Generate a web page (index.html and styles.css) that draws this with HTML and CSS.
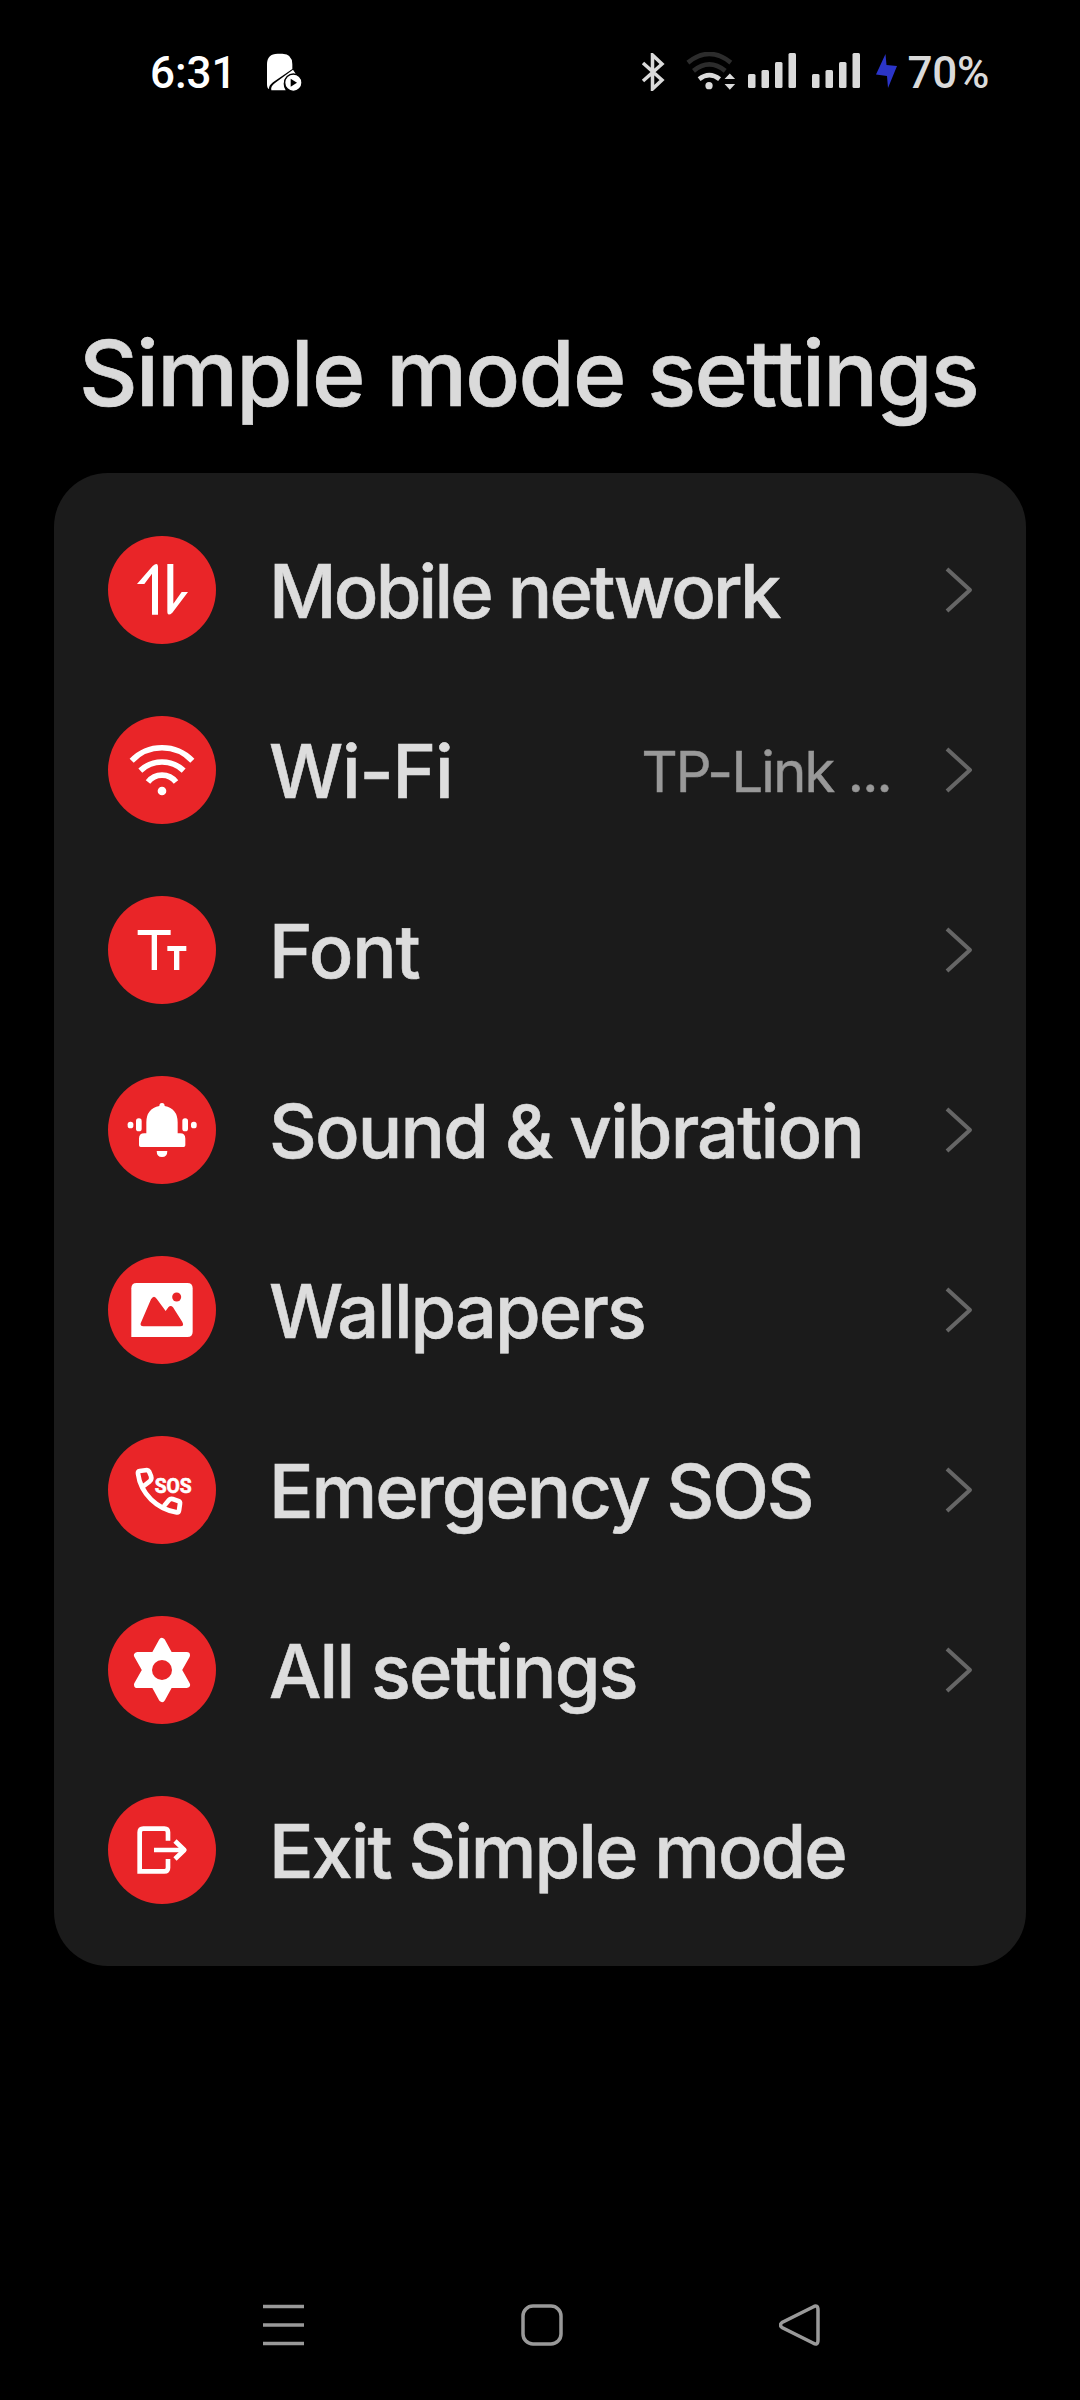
FILE: index.html
```html
<!DOCTYPE html>
<html lang="en">

<head>
    <meta charset="UTF-8">
    <meta name="viewport" content="width=device-width, initial-scale=1.0">
    <title>Simple mode settings</title>
    <link rel="stylesheet" href="styles.css">
</head>

<body>
    <div class="status-bar">
        <span class="time">6:31</span>
        <svg class="notification" viewBox="0 0 105 117">
            <path d="M0 34Q0 2 32 2H46Q76 2 76 34V48L18 88Q5 98 6 108Q0 106 0 94Z" />
            <path d="M13 112Q10 100 24 90L78 50L86 62Q50 66 50 92Q50 104 56 112Z" />
            <circle cx="79" cy="89" r="26" />
            <path class="cutout" d="M71 77V101L90 89Z" />
        </svg>
        <div class="status-icons">
            <svg class="bluetooth" viewBox="0 0 24 38">
                <path d="M2 10L21 27L11.500 36V2L21 11L2 28" />
            </svg>
            <svg class="wifi-status" viewBox="0 0 150 115">
                <path class="dim" d="M5 32Q70 -20 135 32" />
                <path class="dim" d="M22 57Q70 18 118 57" />
                <path class="lit" d="M39 82Q70 58 101 82" />
                <circle cx="69" cy="102" r="11" />
                <path d="M132 65L148 82H116ZM116 97H148L132 114Z" />
            </svg>
            <svg class="signal" viewBox="0 0 48 35">
                <rect x="0" y="21" width="7.500" height="14" rx="1.500" />
                <rect x="13.500" y="17" width="7.500" height="18" rx="1.500" />
                <rect x="27" y="9" width="7.500" height="26" rx="1.500" />
                <rect x="40.500" y="0" width="7.500" height="35" rx="1.500" />
            </svg>
            <svg class="signal" viewBox="0 0 48 35">
                <rect x="0" y="21" width="7.500" height="14" rx="1.500" />
                <rect x="13.500" y="17" width="7.500" height="18" rx="1.500" />
                <rect x="27" y="9" width="7.500" height="26" rx="1.500" />
                <rect x="40.500" y="0" width="7.500" height="35" rx="1.500" />
            </svg>
            <svg class="bolt" viewBox="0 0 21 34">
                <path d="M9.500 0L0 20.500L11 22L12 34L21 12L10.500 11Z" />
            </svg>
            <span class="battery">70%</span>
        </div>
    </div>

    <h1>Simple mode settings</h1>

    <div class="card">
        <div class="row">
            <svg class="icon" viewBox="0 0 324 324">
                <path d="M87 144L134 90Q150 76 150 94V236H132V113L109 144Z" />
                <path d="M178 84H196V203L221 168H240L193 230Q178 243 178 226Z" />
            </svg>
            <span class="label mobile">Mobile network</span>
            <svg class="chevron" viewBox="0 0 28 46"><path d="M2 2L25 23L2 44" /></svg>
        </div>
        <div class="row">
            <svg class="icon" viewBox="0 0 324 324">
                <path class="line wide" d="M71 134A126 126 0 0 1 253 134" />
                <path class="line wide" d="M97 164A94 94 0 0 1 227 164" />
                <path class="line wide" d="M120 198A53 53 0 0 1 204 198" />
                <circle cx="162" cy="225" r="13" />
            </svg>
            <span class="label wifi">Wi-Fi</span>
            <span class="value">TP-Link ...</span>
            <svg class="chevron" viewBox="0 0 28 46"><path d="M2 2L25 23L2 44" /></svg>
        </div>
        <div class="row">
            <svg class="icon" viewBox="0 0 324 324">
                <path d="M89 102H188V117H147V222H131V117H89Z" />
                <path d="M178 150H235V165H214V222H198V165H178Z" />
            </svg>
            <span class="label font">Font</span>
            <svg class="chevron" viewBox="0 0 28 46"><path d="M2 2L25 23L2 44" /></svg>
        </div>
        <div class="row">
            <svg class="icon" viewBox="0 0 324 324">
                <path d="M154 90Q154 81 162 81Q170 81 170 90Q209 98 209 139V172H216Q232 172 232 188V208Q232 213 227 213H98Q93 213 93 208V188Q93 172 109 172H115V139Q115 98 154 90Z" />
                <path d="M146 225H178Q178 243 162 243Q146 243 146 225Z" />
                <rect x="84" y="127" width="17" height="39" rx="8" />
                <rect x="223" y="127" width="17" height="39" rx="8" />
                <rect x="59" y="137" width="17" height="20" rx="8" />
                <rect x="249" y="137" width="17" height="20" rx="8" />
            </svg>
            <span class="label sound">Sound &amp; vibration</span>
            <svg class="chevron" viewBox="0 0 28 46"><path d="M2 2L25 23L2 44" /></svg>
        </div>
        <div class="row">
            <svg class="icon" viewBox="0 0 324 324">
                <path d="M70 97Q70 81 86 81H238Q254 81 254 97V227Q254 243 238 243H70Z" />
                <path class="red" d="M98 202L129 130Q138 115 147 130L173 165L181 154Q188 146 195 154L223 198Q230 211 217 211H106Q96 211 98 202Z" />
                <circle class="red" cx="206" cy="123" r="13.500" />
            </svg>
            <span class="label wallpapers">Wallpapers</span>
            <svg class="chevron" viewBox="0 0 28 46"><path d="M2 2L25 23L2 44" /></svg>
        </div>
        <div class="row">
            <svg class="icon" viewBox="0 0 324 324">
                <path class="line" d="M107 150L125 136Q132 130 129 120L123 106Q121 102 117 102L95 105Q89 106 90 113C98 174 148 220 206 229Q212 230 213 224L216 203Q217 197 211 195L194 189Q187 187 183 192L168 210" />
                <text class="sos" x="140" y="171" textLength="111" lengthAdjust="spacingAndGlyphs">SOS</text>
            </svg>
            <span class="label emergency">Emergency SOS</span>
            <svg class="chevron" viewBox="0 0 28 46"><path d="M2 2L25 23L2 44" /></svg>
        </div>
        <div class="row">
            <svg class="icon" viewBox="0 0 324 324">
                <path class="gear" d="M162 76L185 118H236L211 162L236 206H185L162 248L139 206H88L113 162L88 118H139Z" />
                <circle class="red" cx="162" cy="162" r="30" />
            </svg>
            <span class="label all">All settings</span>
            <svg class="chevron" viewBox="0 0 28 46"><path d="M2 2L25 23L2 44" /></svg>
        </div>
        <div class="row">
            <svg class="icon" viewBox="0 0 324 324">
                <path class="line" d="M180 134V109Q180 98 169 98H106Q95 98 95 109V226H169Q180 226 180 215V189" />
                <path class="line" d="M138 162H229" />
                <path class="line head" d="M201 135L229 162L201 189" />
            </svg>
            <span class="label exit">Exit Simple mode</span>
        </div>
    </div>

    <div class="nav-bar">
        <svg viewBox="0 0 42 42"><path d="M0 2.500H41M0 21H41M0 39.500H41" /></svg>
        <svg viewBox="0 0 42 42"><rect x="2" y="2" width="38" height="38" rx="10" /></svg>
        <svg viewBox="0 0 42 42"><path d="M34 3Q39 0 39 6V36Q39 42 34 39L3 23.500Q0 21 3 18.500Z" /></svg>
    </div>
</body>

</html>
```

FILE: styles.css
```css
* {
    box-sizing: border-box;
}

body {
    font-family: Inter, 'Liberation Sans', sans-serif;
    background-color: #000;
    color: #ddd;
    width: 1080px;
    height: 2400px;
    margin: 0;
    overflow: hidden;
    display: flex;
    flex-direction: column;
}

svg {
    display: block;
    flex: none;
}

/* Status bar */
.status-bar {
    display: flex;
    align-items: center;
    height: 144px;
    padding-left: 150px;
    padding-right: 91px;
    font-family: Roboto, sans-serif;
    font-size: 44px;
    font-weight: 500;
    line-height: 60px;
}

.time {
    width: 117px;
    padding-top: 2px;
    color: #fff;
}

.notification {
    width: 35px;
    height: 39px;
    fill: #fff;
}

.notification .cutout {
    fill: #000;
}

.notification circle {
    stroke: #000;
    stroke-width: 4;
}

.status-icons {
    display: flex;
    align-items: center;
    margin-left: auto;
    fill: #dadada;
}

.bluetooth {
    width: 24px;
    height: 38px;
    margin-right: 21px;
    fill: none;
    stroke: #dadada;
    stroke-width: 3.5;
}

.wifi-status {
    width: 50px;
    height: 38px;
    margin-right: 12px;
    margin-top: -3px;
}

.wifi-status .dim,
.wifi-status .lit {
    fill: none;
    stroke: #2c2c2c;
    stroke-width: 14;
}

.wifi-status .lit {
    stroke: #dadada;
}

.signal {
    width: 48px;
    height: 35px;
    margin-right: 16px;
    margin-top: -3px;
}

.bolt {
    width: 21px;
    height: 34px;
    margin-right: 10px;
    margin-top: -2px;
    fill: #2b35c9;
}

.battery {
    padding-top: 2px;
    color: #dadada;
    letter-spacing: -0.3px;
}

h1 {
    height: 329px;
    margin: 0;
    padding: 174px 0 0 79px;
    color: #dadada;
    font-size: 91px;
    font-weight: 500;
    line-height: 110px;
    letter-spacing: -1.75px;
    white-space: nowrap;
    -webkit-text-stroke: 0.7px #dadada;
}

/* Settings list */
.card {
    height: 1493px;
    margin: 0 54px;
    padding: 27px 53px 26px 54px;
    background-color: #1b1b1b;
    border-radius: 54px;
}

.row {
    display: flex;
    align-items: center;
    height: 180px;
}

.icon {
    width: 108px;
    height: 108px;
    margin-right: 53px;
    border-radius: 50%;
    background-color: #e92528;
    fill: #fff;
}

.icon .red {
    fill: #e92528;
}

.icon .line {
    fill: none;
    stroke: #fff;
    stroke-width: 14;
}

.icon .wide {
    stroke-width: 17;
}

.icon .head {
    stroke-linejoin: round;
}

.icon .gear {
    stroke: #fff;
    stroke-width: 20;
    stroke-linejoin: round;
}

.sos {
    font-family: Roboto, sans-serif;
    font-size: 62px;
    font-weight: 700;
    stroke: #fff;
    stroke-width: 2;
}

.label {
    font-size: 74px;
    font-weight: 500;
    line-height: 90px;
    white-space: nowrap;
    padding-top: 1px;
    -webkit-text-stroke: 0.6px #ddd;
}

/* Tracking differs a little from label to label */
.mobile {
    letter-spacing: -2.8px;
}

.wifi,
.font {
    letter-spacing: -1.2px;
}

.sound,
.all {
    letter-spacing: -1.85px;
}

.wallpapers,
.exit {
    letter-spacing: -2px;
}

.emergency {
    letter-spacing: -2.1px;
}

.value {
    margin-left: auto;
    margin-right: 54px;
    padding-top: 3px;
    color: #999;
    font-size: 56px;
    letter-spacing: -1.7px;
    -webkit-text-stroke: 0.5px #999;
}

.chevron {
    width: 28px;
    height: 46px;
    margin-left: auto;
    fill: none;
    stroke: #666;
    stroke-width: 4;
    stroke-linejoin: round;
}

.value + .chevron {
    margin-left: 0;
}

/* Navigation bar */
.nav-bar {
    display: flex;
    justify-content: space-between;
    margin-top: 338px;
    padding: 0 259px 0 263px;
}

.nav-bar svg {
    width: 42px;
    height: 42px;
    fill: none;
    stroke: #999;
    stroke-width: 3.5;
}
```
